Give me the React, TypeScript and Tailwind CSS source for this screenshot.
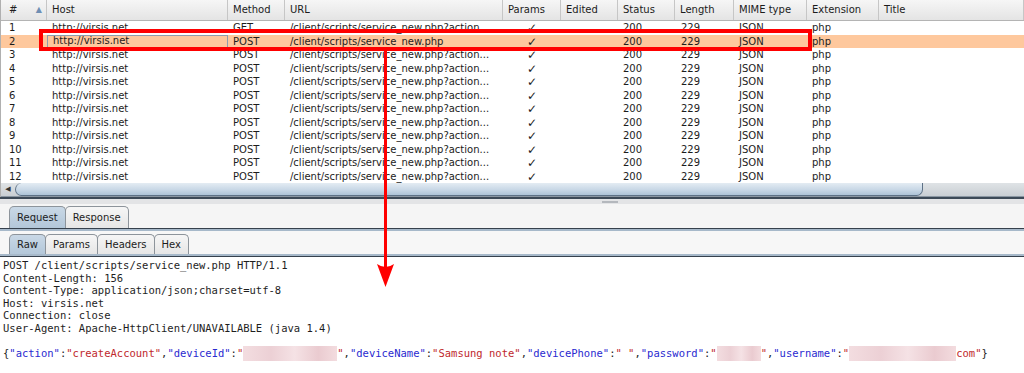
import React from "react";

interface Row {
  id: number;
  host: string;
  method: string;
  url: string;
}

const cols = [
  { key: "id", label: "#", w: "w-[46px]", pad: "pl-[8px]" },
  { key: "host", label: "Host", w: "w-[181px]", pad: "pl-[5px]" },
  { key: "method", label: "Method", w: "w-[57px]", pad: "pl-[5px]" },
  { key: "url", label: "URL", w: "w-[218px]", pad: "pl-[5px]" },
  { key: "params", label: "Params", w: "w-[58px]", pad: "pl-[5px]" },
  { key: "edited", label: "Edited", w: "w-[57px]", pad: "pl-[5px]" },
  { key: "status", label: "Status", w: "w-[57px]", pad: "pl-[5px]" },
  { key: "length", label: "Length", w: "w-[59px]", pad: "pl-[5px]" },
  { key: "mime", label: "MIME type", w: "w-[73px]", pad: "pl-[5px]" },
  { key: "ext", label: "Extension", w: "w-[72px]", pad: "pl-[5px]" },
  { key: "title", label: "Title", w: "flex-1", pad: "pl-[5px]" },
];

const rows: Row[] = Array.from({ length: 12 }, (_, i) => ({
  id: i + 1,
  host: "http://virsis.net",
  method: i === 0 ? "GET" : "POST",
  url: i === 1 ? "/client/scripts/service_new.php" : "/client/scripts/service_new.php?action...",
}));

const Redacted = ({ w }: { w: string }) => (
  <span className={`inline-block ${w} h-[15px] align-middle bg-[linear-gradient(90deg,#f3dde0,#ecd0d5_30%,#f5e2e5_55%,#eacbd0_80%,#f3dcdf)]`} />
);

const Key = ({ children }: { children: React.ReactNode }) => (
  <span className="text-[#2a2ad0]">{children}</span>
);
const Val = ({ children }: { children: React.ReactNode }) => (
  <span className="text-[#c0282c]">{children}</span>
);

const Tab = ({ label, active }: { label: string; active?: boolean }) => (
  <div
    className={`h-full flex items-center px-[7px] border border-b-0 border-[#8d949b] rounded-t-[5px] -mr-px ${
      active
        ? "bg-[linear-gradient(#c9d8e6,#b3c7d9)]"
        : "bg-[linear-gradient(#f6f6f6,#e6e6e6)]"
    }`}
  >
    {label}
  </div>
);

export default function App() {
  return (
    <div className="relative w-[1024px] h-[373px] overflow-hidden bg-white text-[#1c1c1c] font-['DejaVu_Sans',sans-serif] text-[10px] leading-none">
      {/* table */}
      <div className="border-l border-[#b0b0b0]">
        <div className="flex h-[21px] bg-[linear-gradient(#f6f6f6,#e4e4e4)] border-b border-[#b4b4b4]">
          {cols.map((c) => (
            <div key={c.key} className={`${c.w} ${c.pad} flex items-center border-r border-[#c6c6c6] shrink-0`}>
              {c.label}
              {c.key === "id" && <span className="ml-auto mr-[4px] text-[8px] text-[#6f8fb4]">▲</span>}
            </div>
          ))}
        </div>
        {rows.map((r) => {
          const sel = r.id === 2;
          return (
            <div key={r.id} className={`flex h-[13.5px] pt-[1px] ${sel ? "bg-[#fec89d]" : "bg-white"}`}>
              <div className="w-[46px] pl-[8px] flex items-center shrink-0">{r.id}</div>
              <div className={`w-[181px] pl-[5px] flex items-center shrink-0 ${sel ? "border border-[#8e9cae] pl-[4px] -mt-px" : ""}`}>{r.host}</div>
              <div className="w-[57px] pl-[5px] flex items-center shrink-0">{r.method}</div>
              <div className="w-[218px] pl-[5px] flex items-center shrink-0 whitespace-nowrap overflow-hidden">{r.url}</div>
              <div className="w-[58px] flex items-center justify-center shrink-0 text-[12px]">✓</div>
              <div className="w-[57px] shrink-0" />
              <div className="w-[57px] pl-[5px] flex items-center shrink-0">200</div>
              <div className="w-[59px] pl-[6px] flex items-center shrink-0">229</div>
              <div className="w-[73px] pl-[5px] flex items-center shrink-0">JSON</div>
              <div className="w-[72px] pl-[5px] flex items-center shrink-0">php</div>
              <div className="flex-1" />
            </div>
          );
        })}
        {/* horizontal scrollbar */}
        <div className="flex h-[14px] bg-[linear-gradient(#dfe3e6,#c9ced3)] border-b border-[#8a96a2]">
          <div className="w-[14px] flex items-center justify-center text-[7px] text-[#333]">◀</div>
          <div className="w-[908px] h-full rounded-[0_0_9px_9px] rounded-l-[9px] border-r border-b border-l border-[#5d7186] bg-[linear-gradient(#e4ecf3,#c6d6e5_60%,#adc3d7)]" />
        </div>
      </div>
      <div className="h-[2px] bg-[#3c4957]" />
      {/* splitter */}
      <div className="h-[5px] bg-[#e3e4e6] flex justify-center">
        <div className="mt-[2px] ml-[196px] w-[16px] h-[2px] bg-[#b4b8bd]" />
      </div>
      {/* request/response tabs */}
      <div className="h-[24px] pt-[2px] pl-[9px] bg-[#f5f5f5] flex items-end">
        <Tab label="Request" active />
        <Tab label="Response" />
      </div>
      <div className="h-[1px] bg-[#36414d]" />
      <div className="h-[2px] bg-[#a7b9ca]" />
      {/* raw/params tabs */}
      <div className="h-[23px] pt-[3px] pl-[9px] bg-[#f7f7f7] flex items-end">
        <Tab label="Raw" active />
        <Tab label="Params" />
        <Tab label="Headers" />
        <Tab label="Hex" />
      </div>
      <div className="h-[2px] bg-[#a7b9ca]" />
      <div className="h-[1px] bg-[#36414d]" />
      {/* message */}
      <div className="pt-[2px] pl-[3px] font-['DejaVu_Sans_Mono',monospace] text-[10.5px] leading-[12.6px] whitespace-pre text-[#1e1e1e]">
        <div>POST /client/scripts/service_new.php HTTP/1.1</div>
        <div>Content-Length: 156</div>
        <div>Content-Type: application/json;charset=utf-8</div>
        <div>Host: virsis.net</div>
        <div>Connection: close</div>
        <div>User-Agent: Apache-HttpClient/UNAVAILABLE (java 1.4)</div>
        <div>&nbsp;</div>
        <div className="-mt-[1px]">
          {"{"}
          <Key>"action"</Key>:<Val>"createAccount"</Val>,<Key>"deviceId"</Key>:<Val>"</Val>
          <Redacted w="w-[94px]" />
          <Val>"</Val>,<Key>"deviceName"</Key>:<Val>"Samsung note"</Val>,<Key>"devicePhone"</Key>:<Val>" "</Val>,<Key>"password"</Key>:<Val>"</Val>
          <Redacted w="w-[44px]" />
          <Val>"</Val>,<Key>"username"</Key>:<Val>"</Val>
          <Redacted w="w-[107px]" />
          <Val>com"</Val>
          {"}"}
        </div>
      </div>

      {/* annotation overlay */}
      <div className="absolute left-[39px] top-[29px] w-[773px] h-[22px] border-4 border-[#ff0000] pointer-events-none" />
      <svg className="absolute left-0 top-0 pointer-events-none" width="1024" height="373">
        <rect x="384" y="51" width="3" height="222" fill="#ff0000" />
        <path d="M385.5 287 L377 264 Q385.5 270 394 264 Z" fill="#ff0000" />
      </svg>
    </div>
  );
}
